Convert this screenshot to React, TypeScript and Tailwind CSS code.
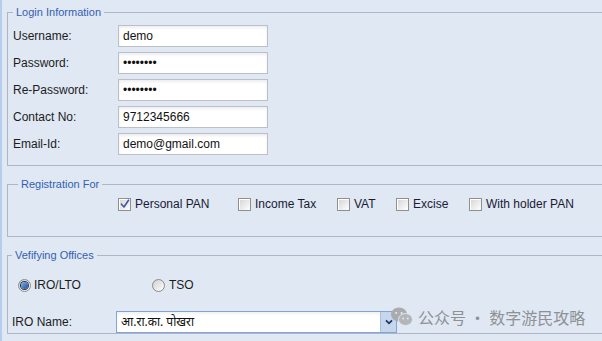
import { ReactNode } from 'react';

interface Field {
  label: string;
  value: string;
}

interface Option {
  label: string;
  checked?: boolean;
  width: string;
}

const fields: Field[] = [
  { label: 'Username:', value: 'demo' },
  { label: 'Password:', value: '••••••••' },
  { label: 'Re-Password:', value: '••••••••' },
  { label: 'Contact No:', value: '9712345666' },
  { label: 'Email-Id:', value: 'demo@gmail.com' },
];

const options: Option[] = [
  { label: 'Personal PAN', checked: true, width: 'w-[120px]' },
  { label: 'Income Tax', width: 'w-[99px]' },
  { label: 'VAT', width: 'w-[59px]' },
  { label: 'Excise', width: 'w-[73px]' },
  { label: 'With holder PAN', width: 'w-[120px]' },
];

function Legend({ children, className = '' }: { children: ReactNode; className?: string }) {
  return (
    <legend className={`px-[3px] text-[11px] leading-[13px] text-[#3460b0] ${className}`}>
      {children}
    </legend>
  );
}

function Checkbox({ checked }: { checked?: boolean }) {
  return (
    <span className="relative flex h-[13px] w-[13px] shrink-0 items-center justify-center border border-[#8f8f8f] bg-gradient-to-br from-[#d4d4d4] to-white shadow-[inset_1px_1px_0_#fff]">
      {checked && (
        <svg className="h-[10px] w-[10px]" viewBox="0 0 10 10" fill="none">
          <path d="M1.5 5.2L4 8L8.5 1.2" stroke="#3b58ad" strokeWidth={1.6} strokeLinecap="round" strokeLinejoin="round" />
        </svg>
      )}
    </span>
  );
}

function Radio({ checked }: { checked?: boolean }) {
  return (
    <span className="flex h-[13px] w-[13px] shrink-0 items-center justify-center rounded-full border border-[#8a8a8a] bg-gradient-to-br from-[#d0d0d0] to-white">
      {checked && (
        <span className="h-[7px] w-[7px] rounded-full bg-gradient-to-br from-[#7fb4ee] to-[#1d4f9a] ring-1 ring-[#25334a]" />
      )}
    </span>
  );
}

function WeChatIcon() {
  return (
    <svg width="22" height="20" viewBox="0 0 22 20">
      <ellipse cx="8" cy="7.5" rx="8" ry="7" fill="#a9abae" />
      <circle cx="5.2" cy="6" r="1.1" fill="#dfe8f3" />
      <circle cx="10.6" cy="6" r="1.1" fill="#dfe8f3" />
      <ellipse cx="14.5" cy="12.5" rx="7" ry="6" fill="#b3b5b8" stroke="#dfe8f3" strokeWidth="1" />
      <circle cx="12.2" cy="11.5" r="0.95" fill="#dfe8f3" />
      <circle cx="16.8" cy="11.5" r="0.95" fill="#dfe8f3" />
    </svg>
  );
}

export default function App() {
  return (
    <div className="relative h-[341px] w-[602px] overflow-hidden border-l-2 border-[#b7cdee] bg-[#dfe8f3] pl-[5px] pt-[6px] font-['Liberation_Sans',Arial,sans-serif] text-[12px] text-[#1c1c1c]">
      {/* Login Information */}
      <fieldset className="w-[640px] border border-[#aeb6c6] pb-[10px] pl-[5px] pt-[6px]">
        <Legend>Login Information</Legend>
        <div className="flex flex-col gap-[5px]">
          {fields.map((f) => (
            <div key={f.label} className="flex h-[22px] items-center">
              <span className="w-[105px]">{f.label}</span>
              <input
                readOnly
                value={f.value}
                className="h-[22px] w-[150px] border border-[#bcbfc5] bg-white px-[4px] text-[12px] text-[#111] shadow-[inset_0_2px_3px_rgba(0,0,0,0.07)] outline-none"
              />
            </div>
          ))}
        </div>
      </fieldset>

      {/* Registration For */}
      <fieldset className="mt-[12px] w-[640px] border border-[#aeb6c6] pb-[24px] pt-[5px]">
        <Legend className="ml-[10px]">Registration For</Legend>
        <div className="ml-[110px] flex h-[16px] items-center">
          {options.map((o) => (
            <label key={o.label} className={`flex items-center gap-[4px] text-[#1a1a33] ${o.width}`}>
              <Checkbox checked={o.checked} />
              <span>{o.label}</span>
            </label>
          ))}
        </div>
      </fieldset>

      {/* Verifying Offices */}
      <fieldset className="mt-[12px] w-[640px] border border-[#aeb6c6] pl-[4px] pt-[15px]">
        <Legend>Vefifying Offices</Legend>
        <div className="ml-[6px] flex h-[16px] items-center">
          <label className="flex w-[134px] items-center gap-[3px]">
            <Radio checked />
            <span>IRO/LTO</span>
          </label>
          <label className="flex items-center gap-[4px]">
            <Radio />
            <span>TSO</span>
          </label>
        </div>
        <div className="mt-[18px] flex h-[22px] items-center">
          <span className="w-[104px]">IRO Name:</span>
          <div className="flex h-[22px] w-[281px] items-stretch border border-[#7fa5d9] bg-white shadow-[inset_0_2px_3px_rgba(0,0,0,0.06)]">
            <span className="flex flex-1 items-center pl-[4px] font-['Noto_Sans','Liberation_Sans',sans-serif] text-[12px] text-[#111]">
              आ.रा.का. पोखरा
            </span>
            <span className="flex w-[16px] items-center justify-center border-l border-[#a9c0e2] bg-[#c6d6ed]">
              <svg width="8" height="6" viewBox="0 0 8 6" fill="none">
                <path d="M1 1.3L4 4.3L7 1.3" stroke="#1e3570" strokeWidth={1.8} />
              </svg>
            </span>
          </div>
        </div>
      </fieldset>

      {/* watermark overlay */}
      <div className="absolute left-[389px] top-[307px] flex items-center gap-[5px] text-[16px] leading-[20px] text-[#8e9196] font-['Noto_Sans_CJK_SC',sans-serif]">
        <WeChatIcon />
        <span>公众号 · 数字游民攻略</span>
      </div>
    </div>
  );
}
